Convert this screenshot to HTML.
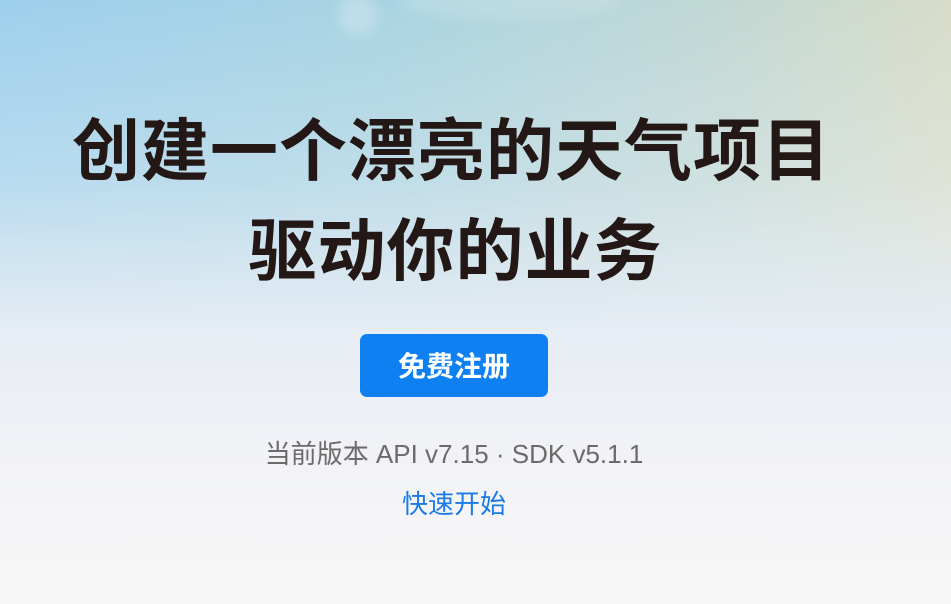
<!DOCTYPE html>
<html><head><meta charset="utf-8"><style>
html,body{margin:0;padding:0}
body{width:951px;height:604px;overflow:hidden;position:relative;font-family:"Liberation Sans","Noto Sans CJK SC",sans-serif;
background:linear-gradient(180deg,rgba(244,244,247,0) 0%,rgba(236,240,246,.35) 30%,#e6edf4 55%,#eef0f5 68%,#f5f5f7 85%,#f6f6f7 100%),linear-gradient(90deg,#9dd0ec 0%,#a8d3e2 40%,#c0d8d4 75%,#d8dcc8 100%);}
.t{position:absolute;left:0;width:903px;text-align:center;font-weight:bold;font-size:68px;color:#231815;line-height:100px;white-space:nowrap;letter-spacing:1px}
.btn{position:absolute;left:360px;top:334px;width:188px;height:63px;border-radius:7px;background:#0e80f1;color:#fff;font-weight:bold;font-size:28px;line-height:65px;text-align:center}
.v{position:absolute;left:0;width:908px;text-align:center;top:436px;font-size:26px;color:#6b6b6b;line-height:36px}
.l{position:absolute;left:0;width:908px;text-align:center;top:486px;font-size:26px;color:#1a7ae8;line-height:36px}
.cloud{position:absolute;border-radius:50%;background:rgba(255,255,255,.3);filter:blur(6px)}
</style></head><body>
<div class="cloud" style="left:338px;top:-5px;width:40px;height:40px;background:rgba(255,255,255,.25)"></div>
<div class="cloud" style="left:400px;top:-20px;width:220px;height:40px;background:rgba(255,255,255,.15)"></div>
<div class="t" style="top:102px">创建一个漂亮的天气项目</div>
<div class="t" style="top:202px;left:4px">驱动你的业务</div>
<div class="btn">免费注册</div>
<div class="v">当前版本 API v7.15 · SDK v5.1.1</div>
<div class="l">快速开始</div>
</body></html>
